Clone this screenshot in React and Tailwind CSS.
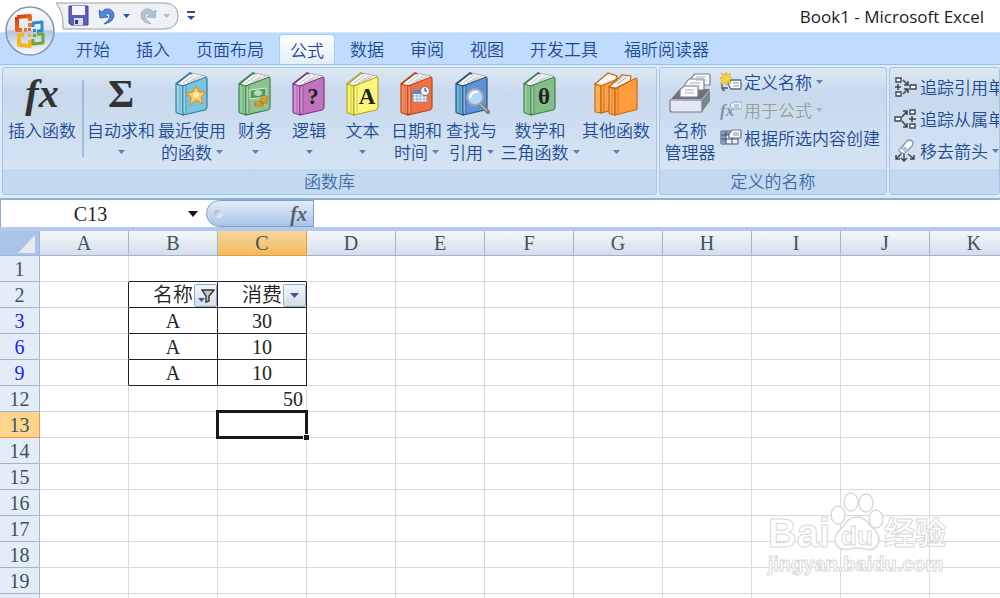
import React, { useState } from "react";

const tabs = [
  "开始",
  "插入",
  "页面布局",
  "公式",
  "数据",
  "审阅",
  "视图",
  "开发工具",
  "福昕阅读器",
];

const columns = ["A", "B", "C", "D", "E", "F", "G", "H", "I", "J", "K"];

const rows = [
  { id: 1 },
  { id: 2, B: "名称", C: "消费", framed: true, header: true },
  { id: 3, B: "A", C: "30", framed: true, filtered: true },
  { id: 6, B: "A", C: "10", framed: true, filtered: true },
  { id: 9, B: "A", C: "10", framed: true, filtered: true },
  { id: 12, C: "50" },
  { id: 13 },
  { id: 14 },
  { id: 15 },
  { id: 16 },
  { id: 17 },
  { id: 18 },
  { id: 19 },
  { id: 20 },
];

const Arrow = ({ color = "#5b7fb5" }) => (
  <svg width="7" height="4" viewBox="0 0 7 4" className="shrink-0">
    <path d="M0 0H7L3.5 4Z" fill={color} />
  </svg>
);

const Book = ({ cover, spine, edge, children }) => (
  <svg width="36" height="44" viewBox="0 0 36 44">
    <path d="M3 12 17 1l5 1 10 2-3 4-22 6Z" fill="#f8f8f8" stroke="#aaa" />
    <path
      d="M9 11 20 3M13 11 24 4M17 10 28 4"
      stroke="#b9bec2"
      strokeWidth="1"
    />
    <path d="M2 12 16 1l2 1" fill="none" stroke={edge} strokeWidth="1.6" />
    <path
      d="M2 12 9 14V43L3 41Q2 41 2 39Z"
      fill={spine}
      stroke={edge}
      strokeWidth="1.2"
    />
    <path
      d="M9 14 32 5Q33 5 33 7V35Q33 37 31 38L9 43Z"
      fill={cover}
      stroke={edge}
      strokeWidth="1.2"
    />
    <path d="M12 14V41M6 14V41" stroke={edge} opacity="0.5" />
    <path d="M10 15V41" stroke="#fff" opacity="0.5" />
    {children}
  </svg>
);

const BookLetter = ({ children }) => (
  <text
    x="22"
    y="32"
    textAnchor="middle"
    fontFamily="Liberation Serif, serif"
    fontWeight="bold"
    fontSize="23"
    fill="#222"
  >
    {children}
  </text>
);

const StarBook = () => (
  <Book cover="#7cc3de" spine="#9bd4e8" edge="#2f7f9f">
    <path
      d="m22 14 3 6 7 0-5 5 2 7-7-4-6 5 1-8-5-4 7-1Z"
      fill="#ffcb5a"
      stroke="#d98b1c"
    />
    <circle cx="22" cy="23" r="3" fill="#ffe9a8" />
  </Book>
);

const MoneyBook = () => (
  <Book cover="#8cc391" spine="#8fcf9c" edge="#3f8050">
    <path d="m13 18 16-2v9l-16 2Z" fill="#4f9c56" stroke="#dcefd9" />
    <ellipse cx="21" cy="21" rx="4" ry="3" fill="#b5dcae" />
    <path
      d="M24 24h6v7h-6ZM18 30h8v4h-8Z"
      fill="#eeb43a"
      stroke="#a87413"
      strokeWidth="0.8"
    />
    <path d="M24 26.500h6M24 29h6M18 32h8" stroke="#a87413" strokeWidth="0.8" />
  </Book>
);

const DateBook = () => (
  <Book cover="#ef7042" spine="#f58a5f" edge="#c0401c">
    <path d="M14 18h14v12H14Z" fill="#fff" stroke="#8a8fa8" />
    <path d="M14 18h9v4h-9Z" fill="#5b86d6" />
    <path
      d="M14 24h14M14 27h14M18 22v8M21 22v8M25 22v8"
      stroke="#8fa3cc"
      strokeWidth="0.9"
    />
    <circle cx="26" cy="19" r="4.500" fill="#f4f4f4" stroke="#777" />
    <path d="M26 16v3h2" fill="none" stroke="#333" />
  </Book>
);

const SearchBook = () => (
  <Book cover="#5f93d6" spine="#6fb0dc" edge="#22567f">
    <path d="m25 31 9 9" stroke="#777b82" strokeWidth="4" strokeLinecap="round" />
    <path d="m26 32 7 7" stroke="#b8bcc2" strokeWidth="1.500" />
    <circle
      cx="21"
      cy="25"
      r="8"
      fill="#b4d7ff"
      stroke="#a0a7b3"
      strokeWidth="2"
    />
    <path d="M16 26q1-7 8-6" stroke="#fff" strokeWidth="2" fill="none" />
  </Book>
);

const TwoBooks = () => (
  <svg width="46" height="44" viewBox="0 0 46 44">
    <g stroke="#c76a10" strokeWidth="1.200">
      <path d="M2 12 15 1l9 3-2 6-14 4Z" fill="#f6f6f4" />
      <path d="M2 12 8 14V41L3 40Q2 40 2 38Z" fill="#ffae58" />
      <path d="M8 14 27 6V36L8 41Z" fill="#fba047" />
      <path d="M16 15 29 3l9 1-1 5-14 7Z" fill="#f6f6f4" />
      <path d="M16 15 22 17V43L17 42Q16 42 16 40Z" fill="#ffae58" />
      <path d="M22 17 43 6Q44 6 44 8V36Q44 38 42 38L22 43Z" fill="#ff9c3f" />
      <path d="M11 14V40M25 16V42M19 16V42" opacity="0.600" />
    </g>
    <path d="M20 12 30 5M24 12 34 5" stroke="#aaa" />
  </svg>
);

const CardBox = () => (
  <svg width="44" height="44" viewBox="0 0 44 44">
    <path d="M3 27 12 17H42L34 27Z" fill="#6b727c" />
    <g fill="#fbfbfb" stroke="#7b828c" strokeWidth="1.200">
      <path d="m23 6 4-4h14q1 0 1 1v9q0 1-1 1H24Z" />
      <path d="m17 12 4-5h14q1 0 1 1v9q0 1-1 1H17Z" />
      <path d="m12 18 4-4h13q1 0 1 1v9q0 1-1 1H12Z" />
    </g>
    <path
      d="M28 5h10M28 8h10M22 11h10M22 14h10M17 18h9M17 21h9"
      stroke="#a9afb7"
    />
    <path d="M34 28 42 18V29L34 40Z" fill="#7d858f" />
    <path
      d="M2 28H34V40H4Q2 40 2 38Z"
      fill="#e3e8f2"
      stroke="#757c88"
      strokeWidth="1.200"
    />
  </svg>
);

const TagIcon = () => (
  <svg width="22" height="20" viewBox="0 0 22 20">
    <path d="M2 12v5M2 16h6M2 18h3" stroke="#555" strokeWidth="1.300" />
    <path
      d="m8 12 3-4h9q1 0 1 1v7q0 1-1 1h-9Z"
      fill="#fff"
      stroke="#5e6a80"
      strokeWidth="1.300"
    />
    <path d="M13 11h6M13 14h6" stroke="#8390a8" />
    <path
      d="m6 0 1 3 4-2-2 4 3 1-3 2 2 4-4-2-1 3-2-3-4 2 2-4-2-2 3-1L1 1l4 2Z"
      fill="#f7d43b"
      stroke="#e0a512"
      strokeWidth="0.600"
    />
  </svg>
);

const FxTagIcon = () => (
  <svg width="22" height="20" viewBox="0 0 22 20">
    <text
      x="0"
      y="16"
      fontFamily="Liberation Serif, serif"
      fontStyle="italic"
      fontWeight="bold"
      fontSize="17"
      fill="#8392ab"
    >
      fx
    </text>
    <path
      d="m10 5 3-3h7q2 0 2 1v5q0 1-1 1h-9Z"
      fill="#e8eff8"
      stroke="#8da2c4"
    />
    <path d="M14 5h5M14 7h5" stroke="#8da2c4" />
  </svg>
);

const TableTagIcon = () => (
  <svg width="22" height="20" viewBox="0 0 22 20">
    <path d="M1 3h17v13H1Z" fill="#eef2fb" stroke="#4d5668" />
    <path d="M1 3h10v4H1ZM1 3h5v13H1Z" fill="#8996bb" />
    <path d="M1 7h17M1 11h17M6 3v13M12 3v13" stroke="#4d5668" />
    <path
      d="m9 6 3-4h8q1 0 1 1v6q0 1-1 1H9Z"
      fill="#fff"
      stroke="#5e6a80"
      strokeWidth="1.200"
    />
    <path d="M13 5h6M13 7h6" stroke="#8390a8" />
  </svg>
);

const PrecedentsIcon = () => (
  <svg width="24" height="22" viewBox="0 0 24 22">
    <g fill="#fff" stroke="#3e4654" strokeWidth="1.400">
      <path d="M2 2h5v4H2ZM2 16h5v4H2ZM16 9h6v4h-6Z" />
    </g>
    <path
      d="M1 11h6M4 8v6M9 4l5 5M14 5v4h-4M9 18l5-5M10 13h4v4"
      fill="none"
      stroke="#3e4654"
      strokeWidth="1.500"
    />
  </svg>
);

const DependentsIcon = () => (
  <svg width="24" height="22" viewBox="0 0 24 22">
    <g fill="#fff" stroke="#3e4654" strokeWidth="1.400">
      <path d="M16 2h5v4h-5ZM16 16h5v4h-5ZM1 9h6v4H1Z" />
    </g>
    <path
      d="M15 11h7M18 8v6M8 9l5-6M9 3h4v4M8 13l5 6M9 19h4v-4"
      fill="none"
      stroke="#3e4654"
      strokeWidth="1.500"
    />
  </svg>
);

const EraserIcon = () => (
  <svg width="24" height="24" viewBox="0 0 24 24">
    <path
      d="M6 10 13 2q3-2 5 0t0 5l-7 7q-3 1-5-1t0-3Z"
      fill="#fff"
      stroke="#8a93a6"
      strokeWidth="1.300"
    />
    <path d="M6 10q3 0 5 4l3-3q-2-4-5-4Z" fill="#b9c3d8" />
    <path
      d="M7 15 2 20M2 16v4h4M10 15v7M7 19l3 3 3-3M14 15l6 5M20 16v4h-4"
      fill="none"
      stroke="#3e4654"
      strokeWidth="1.500"
    />
  </svg>
);

const OfficeLogo = () => (
  <svg width="52" height="52" viewBox="0 0 52 52">
    <defs>
      <linearGradient id="orb" x1="0" y1="0" x2="0" y2="1">
        <stop offset="0" stopColor="#ffffff" />
        <stop offset="0.480" stopColor="#dfe5ee" />
        <stop offset="0.500" stopColor="#b2c5e2" />
        <stop offset="1" stopColor="#fbfdff" />
      </linearGradient>
      <linearGradient id="orangeSquare" x1="0" y1="0" x2="1" y2="1">
        <stop offset="0" stopColor="#d83a12" />
        <stop offset="1" stopColor="#f58a2c" />
      </linearGradient>
    </defs>
    <circle
      cx="26"
      cy="26"
      r="24"
      fill="url(#orb)"
      stroke="#8795ab"
      strokeWidth="1.500"
    />
    <g fill="none" strokeWidth="3" strokeLinejoin="round">
      <path
        d="M13 12 26 11V16M13 12V25H18M26 18V22M20 25H23"
        stroke="url(#orangeSquare)"
        strokeWidth="4"
      />
      <path d="M29 22V18L38 17V26H33" stroke="#2b8bcb" />
      <path d="M20 30H15V40L26 41V35" stroke="#f8b51c" strokeWidth="4" />
      <path d="M29 34V39L39 38V29H33" stroke="#6aa83a" />
    </g>
    <path d="M24 23h3v3h-3Z" fill="#e8622a" />
    <path d="M29 24h3v3h-3Z" fill="#2b8bcb" />
    <path d="M24 29h3v3h-3Z" fill="#f8b51c" />
    <path d="M29 29h3v3h-3Z" fill="#6aa83a" />
  </svg>
);

const SaveIcon = () => (
  <svg width="21" height="21" viewBox="0 0 21 21">
    <path d="M1 1H20V20H3L1 18Z" fill="#5c5fb8" stroke="#40439a" />
    <path d="M4 1H17V10H4Z" fill="#f3f5ff" />
    <path d="M6 13H15V20H6Z" fill="#d8dcf0" />
    <path d="M7 15H10V19H7Z" fill="#34377f" />
  </svg>
);

const CurvedArrow = ({ fill, stroke, flipped }) => (
  <svg width="18" height="18" viewBox="0 0 18 18">
    <path
      d="M1 3 2 11 10 10 7 8Q11 5 12 9 12 13 6 17 16 15 16 8 15 1 8 2 6 2 4 5Z"
      fill={fill}
      stroke={stroke}
      strokeWidth="0.800"
      transform={flipped ? "matrix(-1 0 0 1 18 0)" : undefined}
    />
  </svg>
);

const QuickAccess = () => (
  <div className="relative ml-[55px] mt-[1px] flex h-[29px] w-[125px] items-center pl-[13px]">
    <svg
      className="absolute inset-0"
      width="125"
      height="29"
      viewBox="0 0 125 29"
    >
      <path
        d="M1 2H110Q123 3 123 15 123 27 110 28H8Q9 11 1 2Z"
        fill="#eef2f7"
        stroke="#9a9da3"
      />
    </svg>
    <div className="relative flex items-center">
      <button aria-label="保存">
        <SaveIcon />
      </button>
      <button aria-label="撤消" className="ml-[9px]">
        <CurvedArrow fill="#4f86d8" stroke="#2c5aa8" />
      </button>
      <button aria-label="撤消列表" className="ml-[7px]">
        <Arrow color="#2b579a" />
      </button>
      <button aria-label="恢复" className="ml-[9px]">
        <CurvedArrow fill="#b3c2d6" stroke="#98a8be" flipped />
      </button>
      <button aria-label="恢复列表" className="ml-[6px]">
        <Arrow color="#b5bac2" />
      </button>
    </div>
  </div>
);

const BigButton = ({ icon, label, second, arrow, className }) => (
  <button
    className={`flex shrink-0 flex-col items-center whitespace-nowrap text-[17px] leading-[22px] text-[#1e4a94] ${className}`}
  >
    <span className="flex h-[51px] items-center justify-center">{icon}</span>
    <span className="h-[22px]">{label}</span>
    <span className="flex h-[22px] items-center gap-1">
      {second}
      {arrow && <Arrow />}
    </span>
  </button>
);

const SmallButton = ({ icon, label, arrow, disabled, className }) => (
  <button
    disabled={disabled}
    className={`flex items-center whitespace-nowrap text-[17px] leading-[22px] ${
      disabled ? "text-[#9d9d9d]" : "text-[#1e4a94]"
    } ${className}`}
  >
    <span className="mr-[2px]">{icon}</span>
    {label}
    {arrow && (
      <span className="ml-1 flex">
        <Arrow color={disabled ? "#b0b0b0" : "#5b7fb5"} />
      </span>
    )}
  </button>
);

const Group = ({ title, className, children }) => (
  <section
    className={`flex flex-col overflow-hidden rounded-[3px] border border-[#a9c4e2] bg-linear-to-b from-[#dde8f4] from-0% via-[#c8d9ed] via-20% to-[#d9e8f6] ${className}`}
  >
    <div className="flex h-[101px] shrink-0">{children}</div>
    <h2 className="h-[25px] bg-[#c2d9f0] text-center text-[17px] leading-[24px] font-[350] text-[#3e6aaa]">
      {title}
    </h2>
  </section>
);

const Ribbon = () => (
  <div className="flex h-[134px] shrink-0 gap-[2px] border-y border-t-[#9dbfe8] border-b-[#c5f2ff] bg-[#dcebfa] py-[2px] pl-[2px]">
    <Group title="函数库" className="w-[655px] shrink-0">
      <BigButton
        className="ml-[1px] w-[76px]"
        label="插入函数"
        icon={
          <span className="font-['Liberation_Serif',serif] text-[40px] leading-[44px] font-bold text-[#333] italic">
            fx
          </span>
        }
      />
      <span className="mx-[2px] mt-[12px] h-[77px] w-[2px] bg-[#9dbce0]" />
      <BigButton
        className="w-[70px]"
        label="自动求和"
        arrow
        icon={
          <span className="font-['Liberation_Serif',serif] text-[40px] leading-[44px] font-bold text-[#333]">
            Σ
          </span>
        }
      />
      <BigButton
        className="w-[72px]"
        label="最近使用"
        second="的函数"
        arrow
        icon={<StarBook />}
      />
      <BigButton
        className="w-[54px]"
        label="财务"
        arrow
        icon={<MoneyBook />}
      />
      <BigButton
        className="w-[54px]"
        label="逻辑"
        arrow
        icon={
          <Book cover="#c074c0" spine="#d68fd3" edge="#7c3a80">
            <BookLetter>?</BookLetter>
          </Book>
        }
      />
      <BigButton
        className="w-[53px]"
        label="文本"
        arrow
        icon={
          <Book cover="#fdf67c" spine="#f6f06a" edge="#b3a51c">
            <BookLetter>A</BookLetter>
          </Book>
        }
      />
      <BigButton
        className="w-[55px]"
        label="日期和"
        second="时间"
        arrow
        icon={<DateBook />}
      />
      <BigButton
        className="w-[55px]"
        label="查找与"
        second="引用"
        arrow
        icon={<SearchBook />}
      />
      <BigButton
        className="w-[82px]"
        label="数学和"
        second="三角函数"
        arrow
        icon={
          <Book cover="#84bd88" spine="#93cf98" edge="#3f8050">
            <BookLetter>θ</BookLetter>
          </Book>
        }
      />
      <BigButton
        className="w-[70px]"
        label="其他函数"
        arrow
        icon={<TwoBooks />}
      />
    </Group>
    <Group title="定义的名称" className="w-[228px] shrink-0">
      <BigButton
        className="ml-[3px] w-[54px]"
        label="名称"
        second="管理器"
        icon={<CardBox />}
      />
      <div className="ml-[3px] flex flex-col">
        <SmallButton
          className="h-[28px]"
          label="定义名称"
          arrow
          icon={<TagIcon />}
        />
        <SmallButton
          className="h-[28px]"
          label="用于公式"
          arrow
          disabled
          icon={<FxTagIcon />}
        />
        <SmallButton
          className="h-[28px]"
          label="根据所选内容创建"
          icon={<TableTagIcon />}
        />
      </div>
    </Group>
    <Group className="min-w-0 flex-1">
      <div className="ml-[4px] flex flex-col pt-[3px]">
        <SmallButton
          className="h-[32px]"
          label="追踪引用单"
          icon={<PrecedentsIcon />}
        />
        <SmallButton
          className="h-[32px]"
          label="追踪从属单"
          icon={<DependentsIcon />}
        />
        <SmallButton
          className="h-[32px]"
          label="移去箭头"
          arrow
          icon={<EraserIcon />}
        />
      </div>
    </Group>
  </div>
);

const FormulaBar = () => {
  const [cellName, setCellName] = useState("C13");
  const [formula, setFormula] = useState("");

  return (
    <div className="flex h-[33px] shrink-0 border-t-2 border-b-4 border-t-[#93b0d3] border-b-[#b3cbe8] bg-white font-['Liberation_Serif','Noto_Sans_CJK_SC',serif] text-[20px]">
      <input
        aria-label="名称框"
        className="w-[180px] border-l border-[#8fabce] text-center text-[#222] outline-none"
        value={cellName}
        onChange={(e) => setCellName(e.target.value)}
      />
      <button
        aria-label="名称列表"
        className="flex w-[26px] items-center justify-center"
      >
        <svg width="10" height="6" viewBox="0 0 10 6">
          <path d="M0 0H10L5 6Z" fill="#111" />
        </svg>
      </button>
      <div className="flex w-[108px] items-center justify-between rounded-l-full border border-[#7d9fc9] bg-linear-to-b from-[#e4eefb] to-[#a9c3e8] pr-[6px] pl-[7px]">
        <span className="size-[8px] rounded-full bg-linear-to-br from-[#9aa9bf] to-white" />
        <button
          aria-label="插入函数"
          className="text-[20px] leading-[24px] font-bold text-[#5a5f68] italic"
        >
          fx
        </button>
      </div>
      <input
        aria-label="编辑栏"
        className="min-w-0 flex-1 px-1 outline-none"
        value={formula}
        onChange={(e) => setFormula(e.target.value)}
      />
    </div>
  );
};

const FilterButton = ({ active, name }) => (
  <button
    aria-label={name}
    className="absolute right-0 bottom-0 flex size-[23px] items-center justify-center rounded-[2px] border border-[#8fa9cb] bg-linear-to-b from-[#f4f6f9] to-[#d6dde6]"
  >
    {active ? (
      <svg width="18" height="16" viewBox="0 0 18 16">
        <path
          d="M5 2H17L12 8V13L9 14V8Z"
          fill="#c9c9c9"
          stroke="#333"
          strokeWidth="1.400"
        />
        <path d="M1 10H8L4.500 14Z" fill="#3a55b0" />
      </svg>
    ) : (
      <svg width="9" height="5" viewBox="0 0 9 5">
        <path d="M0 0H9L4.500 5Z" fill="#3a55b0" />
      </svg>
    )}
  </button>
);

const cellBorder = (row, index, col) => {
  const next = rows[index + 1];
  const inFrame = col === "B" || col === "C";
  const bottom =
    inFrame && (row.framed || (next && next.framed))
      ? "border-b-[#222]"
      : "border-b-[#d3daea]";
  const right =
    row.framed && (inFrame || col === "A")
      ? "border-r-[#222]"
      : "border-r-[#d3daea]";
  return `${bottom} ${right}`;
};

const Sheet = () => (
  <table className="w-[1019px] table-fixed border-separate border-spacing-0 font-['Liberation_Serif','Noto_Sans_CJK_SC',serif] text-[20px] leading-[23px]">
    <colgroup>
      <col className="w-[40px]" />
      {columns.map((col) => (
        <col key={col} className="w-[89px]" />
      ))}
    </colgroup>
    <thead>
      <tr className="h-[25px]">
        <th
          aria-label="全选"
          className="border-r border-b border-[#9eb6ce] bg-[#a9c4e9] p-0"
        >
          <svg width="38" height="23" viewBox="0 0 38 23" className="ml-auto">
            <path d="M34 3V21H17Z" fill="#e6ebf3" />
          </svg>
        </th>
        {columns.map((col) => (
          <th
            key={col}
            className={`border-r border-b p-0 pt-px font-normal text-[#3b5458] ${
              col === "C"
                ? "border-[#f29536] bg-linear-to-b from-[#f8d69b] to-[#f1bd5c]"
                : "border-[#9eb6ce] bg-linear-to-b from-[#f4f8fc] to-[#d5dde9]"
            }`}
          >
            {col}
          </th>
        ))}
      </tr>
    </thead>
    <tbody>
      {rows.map((row, index) => (
        <tr key={row.id} className="h-[26px]">
          <th
            className={`border-r border-b p-0 pt-[2px] font-normal ${
              row.id === 13
                ? "border-[#f29536] bg-[#ffd58d]"
                : "border-[#9eb6ce] bg-[#e4ecf7]"
            } ${row.filtered ? "text-[#2020f0]" : "text-[#3b5458]"}`}
          >
            {row.id}
          </th>
          {columns.map((col) => (
            <td
              key={col}
              className={`relative border-r border-b p-0 pt-[2px] text-[#222] ${
                row.framed ? "text-center" : "pr-[3px] text-right"
              } ${cellBorder(row, index, col)}`}
            >
              {row[col]}
              {row.header && row[col] && (
                <FilterButton active={col === "B"} name={`筛选${row[col]}`} />
              )}
              {row.id === 13 && col === "C" && (
                <span className="absolute -inset-[2px] z-10 border-3 border-[#1b1712]">
                  <span className="absolute -right-[5px] -bottom-[5px] size-[7px] border border-white bg-[#1b1712]" />
                </span>
              )}
            </td>
          ))}
        </tr>
      ))}
    </tbody>
  </table>
);

const Watermark = () => (
  <div className="pointer-events-none absolute right-[54px] bottom-[22px] font-['Liberation_Sans','Noto_Sans_CJK_SC',sans-serif] font-bold text-white [-webkit-text-stroke:1px_#d9d9d9]">
    <div className="flex items-end">
      <span className="text-[40px] leading-[38px]">Bai</span>
      <span className="relative flex h-[60px] w-[54px] items-end justify-center">
        <svg
          className="absolute inset-0"
          width="54"
          height="60"
          viewBox="0 0 54 60"
          fill="#fff"
          stroke="#d9d9d9"
          strokeWidth="1.500"
        >
          <ellipse cx="8" cy="23" rx="7" ry="9" />
          <ellipse cx="21" cy="10" rx="7" ry="9" />
          <ellipse cx="36" cy="11" rx="7" ry="9" />
          <ellipse cx="46" cy="27" rx="7" ry="9" />
          <path d="M27 25Q35 25 40 34 50 41 49 49 46 60 35 57 27 55 19 57 7 59 5 49 4 42 13 35 18 25 27 25Z" />
        </svg>
        <span className="relative text-[26px] leading-[32px]">du</span>
      </span>
      <span className="text-[31px] leading-[36px]">经验</span>
    </div>
    <div className="text-[20px] leading-[24px]">jingyan.baidu.com</div>
  </div>
);

const App = () => {
  const [activeTab, setActiveTab] = useState("公式");

  return (
    <div className="flex h-screen flex-col overflow-hidden bg-white font-['Noto_Sans_CJK_SC',sans-serif] font-[350]">
      <header className="relative shrink-0">
        <div className="flex h-[32px]">
          <QuickAccess />
          <button aria-label="自定义快速访问工具栏" className="ml-[6px]">
            <svg width="10" height="10" viewBox="0 0 10 10">
              <path d="M1 1H9" stroke="#2b4f8f" strokeWidth="2" />
              <path d="M1 5H9L5 9Z" fill="#2b4f8f" />
            </svg>
          </button>
          <h1 className="ml-auto pr-[16px] font-['Open_Sans',sans-serif] text-[17px] leading-[33px] font-normal text-[#222]">
            Book1 - Microsoft Excel
          </h1>
        </div>
        <nav className="flex h-[32px] border-t border-[#d7e8fd] bg-[#bfdbff] pl-[63px]">
          {tabs.map((tab) => (
            <button
              key={tab}
              onClick={() => setActiveTab(tab)}
              className={`text-[17px] leading-[30px] whitespace-nowrap text-[#1e4a94] ${
                tab === activeTab
                  ? "mx-[2px] mt-[1px] rounded-t-[4px] border border-b-0 border-[#9dd0f0] bg-linear-to-b from-white to-[#e3eefa] px-[10px]"
                  : "px-[13px]"
              }`}
            >
              {tab}
            </button>
          ))}
        </nav>
        <button
          aria-label="Office 按钮"
          className="absolute top-[5px] left-[4px]"
        >
          <OfficeLogo />
        </button>
      </header>
      <Ribbon />
      <FormulaBar />
      <main className="relative min-h-0 flex-1 overflow-hidden">
        <Sheet />
        <Watermark />
      </main>
    </div>
  );
};

export default App;
